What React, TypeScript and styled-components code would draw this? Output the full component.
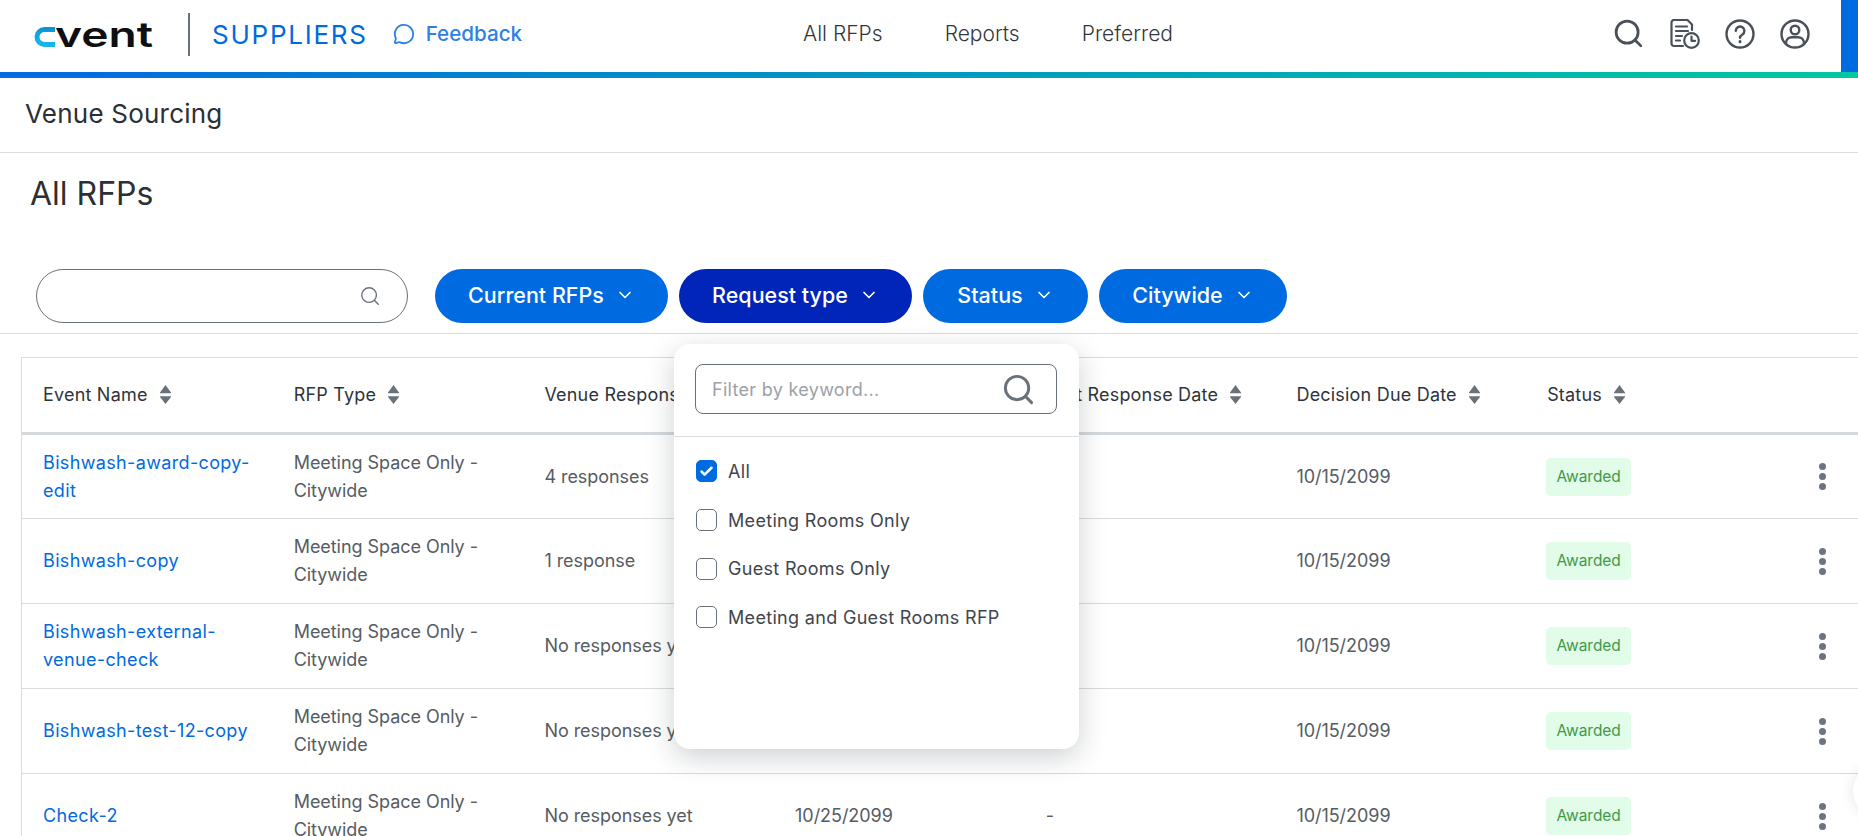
import React from "react";
import styled, { createGlobalStyle } from "styled-components";
import { Search, ChevronDown, MessageCircle, Check } from "lucide-react";

const Global = createGlobalStyle`
  html, body { margin: 0; padding: 0; height: 100%; background: #fff; overflow: hidden; }
  body { font-family: Inter, "Noto Sans", "Liberation Sans", sans-serif; color: #2b3036; }
  * { box-sizing: border-box; }
`;

const Page = styled.div`
  position: relative;
  width: 1858px;
  height: 836px;
  overflow: hidden;
`;

const TopBar = styled.header`
  display: flex;
  align-items: center;
  height: 72px;
  padding-left: 34px;
`;

const LogoSvg = styled.svg`
  display: block;
  width: 120px;
  height: 36px;
  margin-top: -1px;
`;

const BrandDivider = styled.span`
  width: 2px;
  height: 43px;
  margin: -3px 22px 0 34px;
  background: #69717a;
`;

const Suppliers = styled.span`
  font-size: 26px;
  letter-spacing: 1.75px;
  color: #006ae1;
  margin-top: -3px;
`;

const Feedback = styled.a`
  display: flex;
  align-items: center;
  gap: 11px;
  margin-left: 25px;
  margin-top: -5px;
  font-size: 20.6px;
  font-weight: 500;
  color: #2f80e6;
`;

const Nav = styled.nav`
  display: flex;
  gap: 62px;
  margin-left: 281px;
  margin-top: -6px;
`;

const NavLink = styled.a`
  font-size: 21px;
  font-weight: 300;
  color: #32373d;
`;

const Tools = styled.div`
  display: flex;
  align-items: center;
  margin-left: auto;
  gap: 25px;
  margin-top: -5px;
  margin-right: 31px;
  color: #4a5059;
`;

const BlueTab = styled.div`
  align-self: stretch;
  width: 17px;
  background: #006ae1;
`;

const Gradient = styled.div`
  height: 6px;
  background: linear-gradient(90deg, #006ae1 0%, #00c8a0 100%);
`;

const SubHeader = styled.div`
  display: flex;
  align-items: center;
  height: 75px;
  padding: 0 0 3px 25px;
  border-bottom: 1px solid #d9dcde;
  font-size: 26px;
  font-weight: 400;
  letter-spacing: 0.22px;
  color: #2b3036;
`;

const Title = styled.h1`
  margin: 0;
  height: 116px;
  padding: 23px 0 0 30px;
  font-size: 32px;
  line-height: 36px;
  font-weight: 400;
  color: #2b3036;
`;

const FilterRow = styled.div`
  display: flex;
  align-items: flex-start;
  gap: 11px;
  height: 65px;
  padding-left: 36px;
  border-bottom: 1px solid #d9dcde;
`;

const SearchPill = styled.div`
  display: flex;
  align-items: center;
  justify-content: flex-end;
  width: 372px;
  height: 54px;
  margin-right: 16px;
  padding-right: 26px;
  border: 1px solid #69717a;
  border-radius: 27px;
  color: #69717a;
`;

const FilterWrap = styled.div`
  position: relative;
`;

const FilterButton = styled.button<{ $active?: boolean; $w: number }>`
  display: flex;
  align-items: center;
  justify-content: center;
  gap: 11px;
  width: ${(p) => p.$w}px;
  height: 54px;
  padding: 0 0 2px;
  border: 0;
  border-radius: 27px;
  background: ${(p) => (p.$active ? "#0025b8" : "#006ae1")};
  color: #fff;
  font-family: inherit;
  font-size: 21.5px;
  font-weight: 500;
`;

const Popup = styled.div`
  position: absolute;
  left: -5px;
  top: 75px;
  z-index: 5;
  width: 405px;
  height: 405px;
  background: #fff;
  border-radius: 16px;
  box-shadow: 0 8px 28px rgba(30, 40, 50, 0.22);
`;

const PopupSearchArea = styled.div`
  height: 93px;
  padding: 20px 22px 0 21px;
  border-bottom: 1px solid #d9dcde;
`;

const PopupSearch = styled.div`
  display: flex;
  align-items: center;
  height: 50px;
  padding: 0 20px 0 16px;
  border: 1px solid #69717a;
  border-radius: 8px;
  color: #69717a;
`;

const PopupInput = styled.input`
  flex: 1;
  min-width: 0;
  border: 0;
  outline: 0;
  padding: 0;
  font-family: inherit;
  font-size: 18px;
  letter-spacing: 0.3px;
  color: #2b3036;
  &::placeholder { color: #9ba1a7; opacity: 1; }
`;

const OptionList = styled.ul`
  list-style: none;
  margin: 0;
  padding: 10px 0 0 22px;
`;

const Option = styled.li`
  display: flex;
  align-items: center;
  gap: 11px;
  height: 48.7px;
  font-size: 18px;
  letter-spacing: 0.32px;
  color: #3f454c;
`;

const Box = styled.span<{ $checked?: boolean }>`
  display: flex;
  align-items: center;
  justify-content: center;
  width: 21px;
  height: 22px;
  border-radius: 5px;
  border: 1px solid ${(p) => (p.$checked ? "#006ae1" : "#69717a")};
  background: ${(p) => (p.$checked ? "#006ae1" : "#fff")};
  color: #fff;
`;

const TableWrap = styled.div`
  margin: 23px 0 0 21px;
`;

const Table = styled.table`
  width: 1837px;
  table-layout: fixed;
  border-collapse: separate;
  border-spacing: 0;
  border-top: 1px solid #d9dcde;
  border-left: 1px solid #d9dcde;
`;

const Th = styled.th`
  height: 77px;
  padding: 0 0 2px 21px;
  border-bottom: 3px solid #d5d9dc;
  text-align: left;
  font-size: 18px;
  font-weight: 400;
  letter-spacing: 0.2px;
  color: #2f343a;
`;

const ThInner = styled.span`
  display: inline-flex;
  align-items: center;
  gap: 11px;
  white-space: nowrap;
`;

const Td = styled.td`
  height: 85px;
  padding: 0 8px 0 21px;
  border-bottom: 1px solid #d9dcde;
  font-size: 18px;
  line-height: 28px;
  font-weight: 400;
  letter-spacing: -0.05px;
  color: #565c62;
`;

const FirstRowTd = styled(Td)`
  height: 84px;
`;

const EventLink = styled.a`
  display: block;
  color: #006ae1;
  letter-spacing: 0.35px;
`;

const Badge = styled.span`
  display: inline-flex;
  align-items: center;
  justify-content: center;
  width: 85px;
  height: 38px;
  margin-left: -1px;
  border-radius: 5px;
  background: #e1fce9;
  color: #3f9a48;
  font-size: 15.5px;
`;

const Kebab = styled.span`
  display: flex;
  flex-direction: column;
  gap: 3px;
  margin-left: 21px;
`;

const Dot = styled.i`
  width: 7px;
  height: 7px;
  border-radius: 50%;
  background: #6b7480;
`;

const FloatingCircle = styled.div`
  position: absolute;
  left: 1853px;
  top: 765px;
  width: 52px;
  height: 52px;
  border-radius: 50%;
  background: #fff;
  box-shadow: 0 0 14px rgba(30, 40, 50, 0.12);
`;

const Logo = () => (
  <LogoSvg viewBox="0 0 120 36" aria-label="cvent">
    <defs>
      <linearGradient id="cg" x1="0" y1="0" x2="0" y2="1">
        <stop offset="0" stopColor="#0c95d6" />
        <stop offset="0.3" stopColor="#12a5e0" />
        <stop offset="1" stopColor="#19b5ea" />
      </linearGradient>
    </defs>
    <path d="M21 11.5H10.5a7.5 7.5 0 0 0 0 15H21" fill="none" stroke="url(#cg)" strokeWidth="5" />
    <text x="21" y="28.5" fontFamily="Inter, sans-serif" fontSize="35" fontWeight="600" fill="#0d0f12" textLength="98" lengthAdjust="spacingAndGlyphs">
      vent
    </text>
  </LogoSvg>
);

const SortIcon = () => (
  <svg width="13" height="21" viewBox="0 0 13 21" aria-hidden="true">
    <path d="M6.5 1 12 8.5a.5.5 0 0 1-.4.8H1.4a.5.5 0 0 1-.4-.8Z" fill="#69717a" />
    <path d="M6.5 20 12 13a.5.5 0 0 0-.4-.8H1.4a.5.5 0 0 0-.4.8Z" fill="#69717a" />
  </svg>
);

const DocClock = () => (
  <svg width="30" height="30" viewBox="0 0 30 30" fill="none" stroke="currentColor" strokeWidth="2.2" strokeLinecap="round" strokeLinejoin="round" aria-hidden="true">
    <path d="M13 27H4a2.5 2.5 0 0 1-2.5-2.5V3.5A2.5 2.5 0 0 1 4 1h13.5L22 5.5V11" />
    <path d="M6 7.5h11M6 12h12M6 17h6M6 21.5h4" />
    <circle cx="21.5" cy="21.5" r="7.3" />
    <path d="M21.5 17.5v4.3h3.6" />
  </svg>
);

const Help = () => (
  <svg width="30" height="30" viewBox="0 0 30 30" fill="none" stroke="currentColor" strokeWidth="2.4" strokeLinecap="round" aria-hidden="true">
    <circle cx="15" cy="15" r="13.5" />
    <path d="M10.8 11.8a4.3 4.3 0 1 1 6.6 3.7c-1.4.9-2.4 1.6-2.4 3.2" />
    <path d="M15 22.6v.1" strokeWidth="3" />
  </svg>
);

const UserIcon = () => (
  <svg width="30" height="30" viewBox="0 0 30 30" fill="none" stroke="currentColor" strokeWidth="2.4" strokeLinecap="round" aria-hidden="true">
    <circle cx="15" cy="15" r="13.5" />
    <circle cx="15" cy="11" r="4.3" />
    <path d="M6 24.5c0-4.3 3-6.3 6-6.3h6c3 0 6 2 6 6.3" />
  </svg>
);

const columns = ["Event Name", "RFP Type", "Venue Responses", "Response Due Date", "Last Response Date", "Decision Due Date", "Status"];

const rows = [
  { name: "Bishwash-award-copy-edit", resp: "4 responses", due: "10/25/2099" },
  { name: "Bishwash-copy", resp: "1 response", due: "10/25/2099" },
  { name: "Bishwash-external-venue-check", resp: "No responses yet", due: "10/25/2099" },
  { name: "Bishwash-test-12-copy", resp: "No responses yet", due: "10/25/2099" },
  { name: "Check-2", resp: "No responses yet", due: "10/25/2099" },
];

const options = [
  { label: "All", checked: true },
  { label: "Meeting Rooms Only" },
  { label: "Guest Rooms Only" },
  { label: "Meeting and Guest Rooms RFP" },
];

export default function App() {
  return (
    <Page>
      <Global />
      <TopBar>
        <Logo />
        <BrandDivider />
        <Suppliers>SUPPLIERS</Suppliers>
        <Feedback>
          <MessageCircle size={22} strokeWidth={2} />
          Feedback
        </Feedback>
        <Nav>
          <NavLink>All RFPs</NavLink>
          <NavLink>Reports</NavLink>
          <NavLink>Preferred</NavLink>
        </Nav>
        <Tools>
          <Search size={33} strokeWidth={2} />
          <DocClock />
          <Help />
          <UserIcon />
        </Tools>
        <BlueTab />
      </TopBar>
      <Gradient />
      <SubHeader>Venue Sourcing</SubHeader>
      <Title>All RFPs</Title>
      <FilterRow>
        <SearchPill>
          <Search size={22} strokeWidth={1.5} />
        </SearchPill>
        <FilterButton $w={233}>
          Current RFPs <ChevronDown size={20} strokeWidth={2} />
        </FilterButton>
        <FilterWrap>
          <FilterButton $w={233} $active>
            Request type <ChevronDown size={20} strokeWidth={2} />
          </FilterButton>
          <Popup>
            <PopupSearchArea>
              <PopupSearch>
                <PopupInput placeholder="Filter by keyword..." />
                <Search size={35} strokeWidth={2} />
              </PopupSearch>
            </PopupSearchArea>
            <OptionList>
              {options.map((o) => (
                <Option key={o.label}>
                  <Box $checked={o.checked}>{o.checked && <Check size={15} strokeWidth={4} />}</Box>
                  {o.label}
                </Option>
              ))}
            </OptionList>
          </Popup>
        </FilterWrap>
        <FilterButton $w={165}>
          Status <ChevronDown size={20} strokeWidth={2} />
        </FilterButton>
        <FilterButton $w={188}>
          Citywide <ChevronDown size={20} strokeWidth={2} />
        </FilterButton>
      </FilterRow>
      <TableWrap>
        <Table>
          <colgroup>
            {columns.map((c) => (
              <col key={c} width={250.7} />
            ))}
            <col />
          </colgroup>
          <thead>
            <tr>
              {columns.map((c) => (
                <Th key={c}>
                  <ThInner>
                    {c}
                    <SortIcon />
                  </ThInner>
                </Th>
              ))}
              <Th />
            </tr>
          </thead>
          <tbody>
            {rows.map((r, i) => {
              const Cell = i === 0 ? FirstRowTd : Td;
              return (
                <tr key={r.name}>
                  <Cell>
                    <EventLink>{r.name}</EventLink>
                  </Cell>
                  <Cell>Meeting Space Only - Citywide</Cell>
                  <Cell>{r.resp}</Cell>
                  <Cell>{r.due}</Cell>
                  <Cell>-</Cell>
                  <Cell>10/15/2099</Cell>
                  <Cell>
                    <Badge>Awarded</Badge>
                  </Cell>
                  <Cell>
                    <Kebab>
                      <Dot />
                      <Dot />
                      <Dot />
                    </Kebab>
                  </Cell>
                </tr>
              );
            })}
          </tbody>
        </Table>
      </TableWrap>
      <FloatingCircle />
    </Page>
  );
}
